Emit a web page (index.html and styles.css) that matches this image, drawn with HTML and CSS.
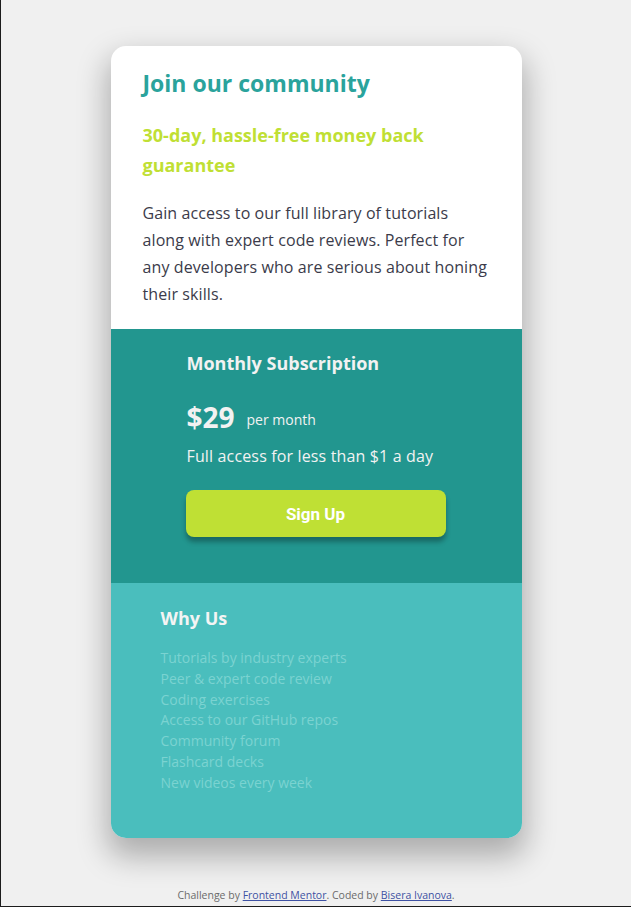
FILE: index.html
```html
<!DOCTYPE html>
<html lang="en">
<head>
<meta charset="utf-8">
<title>Single price grid</title>
<link rel="stylesheet" href="styles.css">
</head>
<body>
<main class="page">
  <article class="card">
    <section class="intro">
      <h1 class="intro-title">Join our community</h1>
      <h2 class="intro-sub">30-day, hassle-free money back guarantee</h2>
      <p class="intro-text">Gain access to our full library of tutorials along with expert code reviews. Perfect for any developers who are serious about honing their skills.</p>
    </section>
    <section class="sub">
      <h2 class="sub-title">Monthly Subscription</h2>
      <div class="price"><span class="price-amount">$29</span><span class="price-per">per month</span></div>
      <p class="sub-text">Full access for less than $1 a day</p>
      <button class="btn" type="button">Sign Up</button>
    </section>
    <section class="why">
      <h2 class="why-title">Why Us</h2>
      <ul class="why-list">
        <li>Tutorials by industry experts</li>
        <li>Peer &amp; expert code review</li>
        <li>Coding exercises</li>
        <li>Access to our GitHub repos</li>
        <li>Community forum</li>
        <li>Flashcard decks</li>
        <li>New videos every week</li>
      </ul>
    </section>
  </article>
  <footer class="attribution">Challenge by <a href="#">Frontend Mentor</a>. Coded by <a href="#">Bisera Ivanova</a>.</footer>
</main>
</body>
</html>
```
FILE: styles.css
```css
* { box-sizing: border-box; }
html {
  height: 100%;
  border-left: 1px solid #1c1c1c;
  border-bottom: 1px solid #1c1c1c;
  background: #f0f0f0;
}
body {
  margin: 0;
  height: 100%;
  font-family: "Open Sans", Lato, sans-serif;
}
.page {
  height: 100%;
  display: flex;
  flex-direction: column;
  align-items: center;
  padding-top: 46px;
}
.card {
  width: 411px;
  border-radius: 15px;
  overflow: hidden;
  background: #fff;
  box-shadow: 0 15px 30px 4px rgba(0, 0, 0, 0.28);
}
.intro {
  padding: 22px 32px 21px;
}
.intro-title {
  margin: 0;
  font-size: 23px;
  line-height: 30px;
  font-weight: 700;
  color: #2aa39c;
}
.intro-sub {
  margin: 22px 0 0;
  font-size: 18px;
  line-height: 30px;
  font-weight: 700;
  color: #c0df34;
}
.intro-text {
  margin: 20px 0 0;
  font-size: 16px;
  line-height: 27px;
  letter-spacing: 0.1px;
  color: #3b3b4a;
}
.sub {
  background: #22968f;
  color: #f2f2f2;
  padding: 20px 76px 46px;
  display: flex;
  flex-direction: column;
}
.sub-title {
  margin: 0;
  font-size: 18px;
  line-height: 28px;
  font-weight: 700;
}
.price {
  margin-top: 20px;
  height: 40px;
  display: flex;
  align-items: center;
  gap: 12px;
}
.price-amount {
  font-size: 28px;
  font-weight: 700;
}
.price-per {
  font-size: 14px;
  padding-top: 4px;
}
.sub-text {
  margin: 7px 0 0;
  font-size: 16px;
  line-height: 24px;
  letter-spacing: 0.15px;
}
.btn {
  margin-top: 22px;
  width: 260px;
  height: 47px;
  margin-left: -1px;
  border: 0;
  border-radius: 8px;
  background: #bfe034;
  color: #fff;
  font-family: Roboto, "Liberation Sans", sans-serif;
  font-weight: 700;
  font-size: 17px;
  box-shadow: 0 5px 5px rgba(0, 0, 0, 0.3);
  cursor: pointer;
}
.why {
  background: #4abebd;
  padding: 21px 50px 44px;
}
.why-title {
  margin: 0;
  font-size: 18px;
  line-height: 28px;
  font-weight: 700;
  color: #f4f4f4;
}
.why-list {
  list-style: none;
  margin: 16px 0 0;
  padding: 0;
  font-size: 14px;
  line-height: 20.8px;
  color: #7bd3d1;
}
.attribution {
  margin-top: auto;
  padding-bottom: 4px;
  font-size: 10.5px;
  line-height: 14px;
  color: #6b6b6b;
  text-align: center;
}
.attribution a {
  color: #3e52a3;
}
```
